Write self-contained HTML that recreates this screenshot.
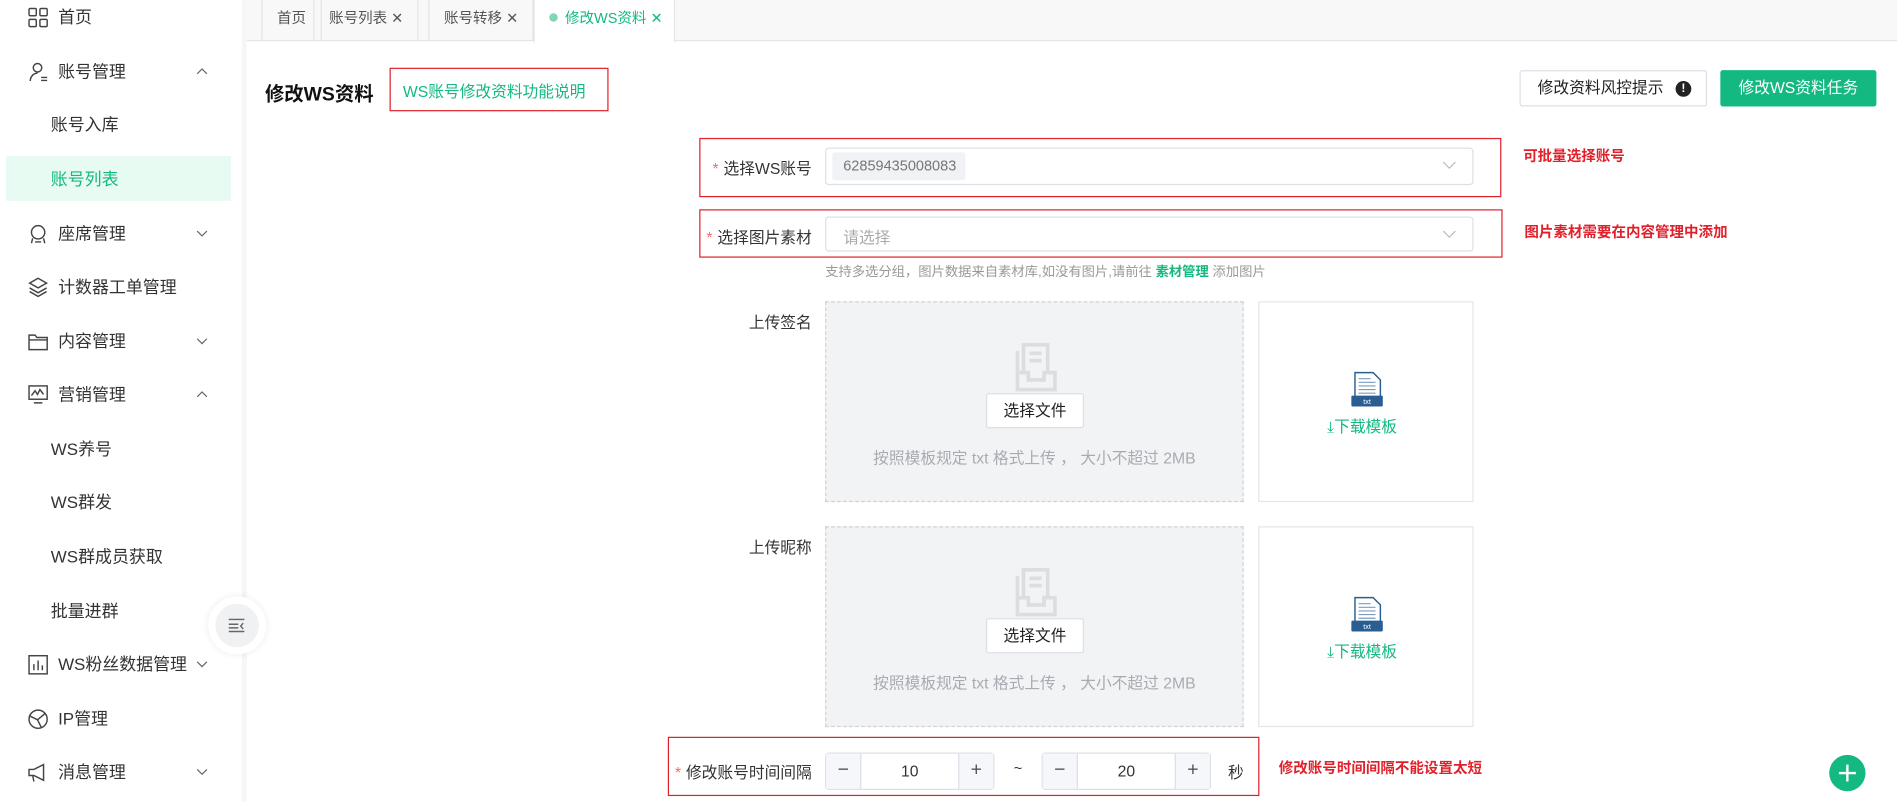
<!DOCTYPE html>
<html><head><meta charset="utf-8"><style>
*{margin:0;padding:0;box-sizing:border-box}
html,body{width:1897px;height:802px;overflow:hidden;background:#fff}
#root{position:absolute;left:0;top:0;width:1568px;height:663px;transform:scale(1.2098);transform-origin:0 0;font-family:"Liberation Sans","Noto Sans CJK SC",sans-serif;color:#333;font-size:14px}
.a{position:absolute;white-space:nowrap}
.side{position:absolute;left:0;top:0;width:200px;height:663px;background:#fff}
.strip{position:absolute;left:200px;top:0;width:4px;height:663px;background:#f5f6f7}
.mi{position:absolute;left:48px;font-size:14px;color:#333;line-height:20px}
.sub{left:42px}
.ic{position:absolute;left:23px;width:17px;height:17px}
.arr{position:absolute;left:162px;width:10px;height:10px}
.tabs{position:absolute;left:204px;top:0;width:1364px;height:34px;background:#f8f8f9;border-bottom:1px solid #e4e5e8}
.tab{position:absolute;top:0;height:34px;line-height:30px;font-size:12px;color:#555;border-left:1px solid #e4e5e8;border-right:1px solid #e4e5e8;padding:0 12px}
.red{position:absolute;border:1px solid #e0202a}
.lbl{position:absolute;font-size:13px;color:#333;text-align:right;width:140px}
.star{color:#f56c6c;margin-right:4px}
.sel{position:absolute;left:682px;width:536px;border:1px solid #dcdfe6;border-radius:3px;background:#fff}
.note{position:absolute;color:#e0202a;font-weight:bold;font-size:12px}
.up{position:absolute;left:682px;width:346px;height:166px;background:#f2f3f5;border:1px dashed #cfd2d8}
.dl{position:absolute;left:1040px;width:178px;height:166px;border:1px solid #e4e6ea;background:#fff}
.btnf{position:absolute;left:132px;top:75px;width:81px;height:29px;background:#fff;border:1px solid #dcdfe6;border-radius:2px;font-size:13px;line-height:27px;text-align:center;color:#222}
.uptxt{position:absolute;left:0;width:100%;top:118px;text-align:center;font-size:13px;color:#a8abb2}
.num{position:absolute;top:622px;width:140px;height:31px;border:1px solid #dcdfe6;border-radius:3px;background:#fff}
.num .m,.num .p{position:absolute;top:0;width:29px;height:29px;background:#f5f7fa;text-align:center;line-height:28px;font-size:16px;color:#555}
.num .m{left:0;border-right:1px solid #dcdfe6}.num .p{right:0;border-left:1px solid #dcdfe6}
.num .v{position:absolute;left:30px;right:30px;text-align:center;line-height:29px;font-size:13px}
</style></head><body><div id="root">
<div class="side">
<svg class="ic" style="top:6px" viewBox="0 0 17 17" fill="none" stroke="#444" stroke-width="1.2"><rect x="1" y="1" width="6" height="6" rx="1"/><rect x="10" y="1" width="6" height="6" rx="1"/><rect x="1" y="10" width="6" height="6" rx="1"/><rect x="10" y="10" width="6" height="6" rx="1"/></svg>
<div class="mi" style="top:4px">首页</div>
<svg class="ic" style="top:51px" viewBox="0 0 17 17" fill="none" stroke="#444" stroke-width="1.2"><circle cx="8" cy="5" r="3.5"/><path d="M2 16c0-4 3-6.5 6-6.5M11 13h5M11 15.5h5"/></svg>
<div class="mi" style="top:49px">账号管理</div>
<svg class="arr" style="top:54px" viewBox="0 0 10 10" fill="none" stroke="#666"><path d="M1 7l4-4 4 4"/></svg>
<div class="mi sub" style="top:93px">账号入库</div>
<div style="position:absolute;left:5px;top:129px;width:186px;height:37px;background:#e8fbf3"></div>
<div class="mi sub" style="top:138px;color:#13b981">账号列表</div>
<svg class="ic" style="top:185px" viewBox="0 0 17 17" fill="none" stroke="#444" stroke-width="1.2"><circle cx="8.5" cy="7" r="5.5"/><path d="M4 12l-1 4M13 12l1 4M6 15h5"/></svg>
<div class="mi" style="top:183px">座席管理</div>
<svg class="arr" style="top:188px" viewBox="0 0 10 10" fill="none" stroke="#666"><path d="M1 3l4 4 4-4"/></svg>
<svg class="ic" style="top:229px" viewBox="0 0 17 17" fill="none" stroke="#444" stroke-width="1.2"><path d="M8.5 1l7 4-7 4-7-4z"/><path d="M1.5 9l7 4 7-4M1.5 12l7 4 7-4"/></svg>
<div class="mi" style="top:227px">计数器工单管理</div>
<svg class="ic" style="top:274px" viewBox="0 0 17 17" fill="none" stroke="#444" stroke-width="1.2"><path d="M1 3h5l1.5 2H16v10H1z M1 7h15"/></svg>
<div class="mi" style="top:272px">内容管理</div>
<svg class="arr" style="top:277px" viewBox="0 0 10 10" fill="none" stroke="#666"><path d="M1 3l4 4 4-4"/></svg>
<svg class="ic" style="top:318px" viewBox="0 0 17 17" fill="none" stroke="#444" stroke-width="1.2"><rect x="1" y="1" width="15" height="11"/><path d="M3 9l3-4 2 3 2-4 3 4M5 15h7"/></svg>
<div class="mi" style="top:316px">营销管理</div>
<svg class="arr" style="top:321px" viewBox="0 0 10 10" fill="none" stroke="#666"><path d="M1 7l4-4 4 4"/></svg>
<div class="mi sub" style="top:361px">WS养号</div>
<div class="mi sub" style="top:405px">WS群发</div>
<div class="mi sub" style="top:450px">WS群成员获取</div>
<div class="mi sub" style="top:495px">批量进群</div>
<svg class="ic" style="top:541px" viewBox="0 0 17 17" fill="none" stroke="#444" stroke-width="1.2"><rect x="1" y="1" width="15" height="15"/><path d="M5 13V8M8.5 13V5M12 13V9"/></svg>
<div class="mi" style="top:539px">WS粉丝数据管理</div>
<svg class="arr" style="top:544px" viewBox="0 0 10 10" fill="none" stroke="#666"><path d="M1 3l4 4 4-4"/></svg>
<svg class="ic" style="top:586px" viewBox="0 0 17 17" fill="none" stroke="#444" stroke-width="1.2"><circle cx="8.5" cy="8.5" r="7.5"/><path d="M2 6l6 3 3 6M8 9l6-5"/></svg>
<div class="mi" style="top:584px">IP管理</div>
<svg class="ic" style="top:630px" viewBox="0 0 17 17" fill="none" stroke="#444" stroke-width="1.2"><path d="M1 6h4l8-4v13l-8-4H1z M4 11l1 5"/></svg>
<div class="mi" style="top:628px">消息管理</div>
<svg class="arr" style="top:633px" viewBox="0 0 10 10" fill="none" stroke="#666"><path d="M1 3l4 4 4-4"/></svg>
</div>
<div class="strip"></div>
<div style="position:absolute;left:172px;top:493px;width:48px;height:48px;border-radius:50%;background:#fff;box-shadow:0 0 6px rgba(0,0,0,.08)"></div>
<div style="position:absolute;left:178px;top:499px;width:36px;height:36px;border-radius:50%;background:#f0f1f3"></div>
<svg style="position:absolute;left:189px;top:511px" width="14" height="12" viewBox="0 0 14 12" fill="none" stroke="#666" stroke-width="1.2"><path d="M0 1h13M0 5h8M0 8h8M0 11h13M12 4l-2 2.5 2 2.5"/></svg>

<div class="tabs">
<div class="tab" style="left:12px">首页</div>
<div class="tab" style="left:55px">账号列表 ✕</div>
<div class="tab" style="left:150px">账号转移 ✕</div>
<div class="tab" style="left:237px;background:#fff;color:#13b981;height:35px;border-bottom:none;padding:0 9px 0 12px"><span style="display:inline-block;width:7px;height:7px;border-radius:50%;background:#7dd8b4;margin-right:6px;vertical-align:1px"></span>修改WS资料 ✕</div>
</div>

<div class="a" style="left:219px;top:64px;font-size:16px;font-weight:bold;color:#111">修改WS资料</div>
<div class="red" style="left:322px;top:56px;width:181px;height:36px"></div>
<div class="a" style="left:333px;top:65px;font-size:13px;color:#13b981">WS账号修改资料功能说明</div>
<div class="a" style="left:1256px;top:58px;width:155px;height:30px;border:1px solid #dcdfe6;border-radius:2px;font-size:13px;line-height:28px;padding-left:14px;color:#222">修改资料风控提示<span style="position:absolute;right:12px;top:8px;width:13px;height:13px;border-radius:50%;background:#222;color:#fff;font-size:10px;line-height:13px;text-align:center;font-weight:bold">!</span></div>
<div class="a" style="left:1422px;top:58px;width:129px;height:30px;background:#13b981;border-radius:2px;color:#fff;font-size:13px;line-height:30px;text-align:center">修改WS资料任务</div>

<div class="red" style="left:578px;top:114px;width:663px;height:49px"></div>
<div class="lbl" style="left:531px;top:129px"><span class="star">*</span>选择WS账号</div>
<div class="sel" style="top:122px;height:31px"><div style="position:absolute;left:5px;top:3px;width:110px;height:23px;background:#f0f2f5;border-radius:2px;font-size:12px;color:#777;line-height:23px;padding-left:9px">62859435008083</div>
<svg style="position:absolute;right:13px;top:10px" width="12" height="8" viewBox="0 0 12 8" fill="none" stroke="#bbb"><path d="M1 1l5 5 5-5"/></svg></div>
<div class="note" style="left:1259px;top:120px">可批量选择账号</div>

<div class="red" style="left:578px;top:173px;width:664px;height:40px"></div>
<div class="lbl" style="left:531px;top:186px"><span class="star">*</span>选择图片素材</div>
<div class="sel" style="top:179px;height:29px"><div style="position:absolute;left:14px;top:6px;font-size:13px;color:#aaa">请选择</div>
<svg style="position:absolute;right:13px;top:10px" width="12" height="8" viewBox="0 0 12 8" fill="none" stroke="#bbb"><path d="M1 1l5 5 5-5"/></svg></div>
<div class="note" style="left:1260px;top:183px">图片素材需要在内容管理中添加</div>
<div class="a" style="left:682px;top:216px;font-size:11px;color:#999">支持多选分组，图片数据来自素材库,如没有图片,请前往 <span style="color:#13b981;font-weight:bold">素材管理</span> 添加图片</div>

<div class="lbl" style="left:531px;top:256px">上传签名</div>
<div class="up" style="top:249px">
<svg style="position:absolute;left:155px;top:30px" width="37" height="45" viewBox="0 0 37 45" fill="none" stroke="#dcdde0" stroke-width="3"><path d="M8 28V5h20v23M3 10v32h31V28h-9v6H12v-6H3"/><path d="M13 12h10M13 18h10"/></svg>
<div class="btnf">选择文件</div><div class="uptxt">按照模板规定 txt 格式上传 ， 大小不超过 2MB</div></div>
<div class="dl" style="top:249px">
<svg style="position:absolute;left:75px;top:57px" width="28" height="32" viewBox="0 0 28 32"><path d="M4 1h15l6 6v18H4z" fill="#fff" stroke="#2a5d91" stroke-width="1.2"/><path d="M7 6h10M7 9h14M7 12h14M7 15h14M7 18h14" stroke="#7b9cc0"/><rect x="1" y="20" width="26" height="9" rx="1" fill="#2a5d91"/><text x="14" y="27" font-size="6" fill="#fff" text-anchor="middle" font-family="Liberation Sans">txt</text></svg>
<div style="position:absolute;left:56px;top:92px;font-size:13px;color:#13b981">⤓下载模板</div></div>

<div class="lbl" style="left:531px;top:442px">上传昵称</div>
<div class="up" style="top:435px">
<svg style="position:absolute;left:155px;top:30px" width="37" height="45" viewBox="0 0 37 45" fill="none" stroke="#dcdde0" stroke-width="3"><path d="M8 28V5h20v23M3 10v32h31V28h-9v6H12v-6H3"/><path d="M13 12h10M13 18h10"/></svg>
<div class="btnf">选择文件</div><div class="uptxt">按照模板规定 txt 格式上传 ， 大小不超过 2MB</div></div>
<div class="dl" style="top:435px">
<svg style="position:absolute;left:75px;top:57px" width="28" height="32" viewBox="0 0 28 32"><path d="M4 1h15l6 6v18H4z" fill="#fff" stroke="#2a5d91" stroke-width="1.2"/><path d="M7 6h10M7 9h14M7 12h14M7 15h14M7 18h14" stroke="#7b9cc0"/><rect x="1" y="20" width="26" height="9" rx="1" fill="#2a5d91"/><text x="14" y="27" font-size="6" fill="#fff" text-anchor="middle" font-family="Liberation Sans">txt</text></svg>
<div style="position:absolute;left:56px;top:92px;font-size:13px;color:#13b981">⤓下载模板</div></div>

<div class="red" style="left:552px;top:609px;width:489px;height:49px"></div>
<div class="lbl" style="left:531px;top:628px"><span class="star">*</span>修改账号时间间隔</div>
<div class="num" style="left:682px"><div class="m">−</div><div class="v">10</div><div class="p">+</div></div>
<div class="a" style="left:838px;top:628px;font-size:12px">~</div>
<div class="num" style="left:861px"><div class="m">−</div><div class="v">20</div><div class="p">+</div></div>
<div class="a" style="left:1015px;top:628px;font-size:13px">秒</div>
<div class="note" style="left:1057px;top:626px">修改账号时间间隔不能设置太短</div>
<div style="position:absolute;left:1512px;top:624px;width:30px;height:30px;border-radius:50%;background:#13b981"></div>
<svg style="position:absolute;left:1519px;top:631px" width="16" height="16" viewBox="0 0 16 16" stroke="#fff" stroke-width="2"><path d="M8 1v14M1 8h14"/></svg>
</div></body></html>
